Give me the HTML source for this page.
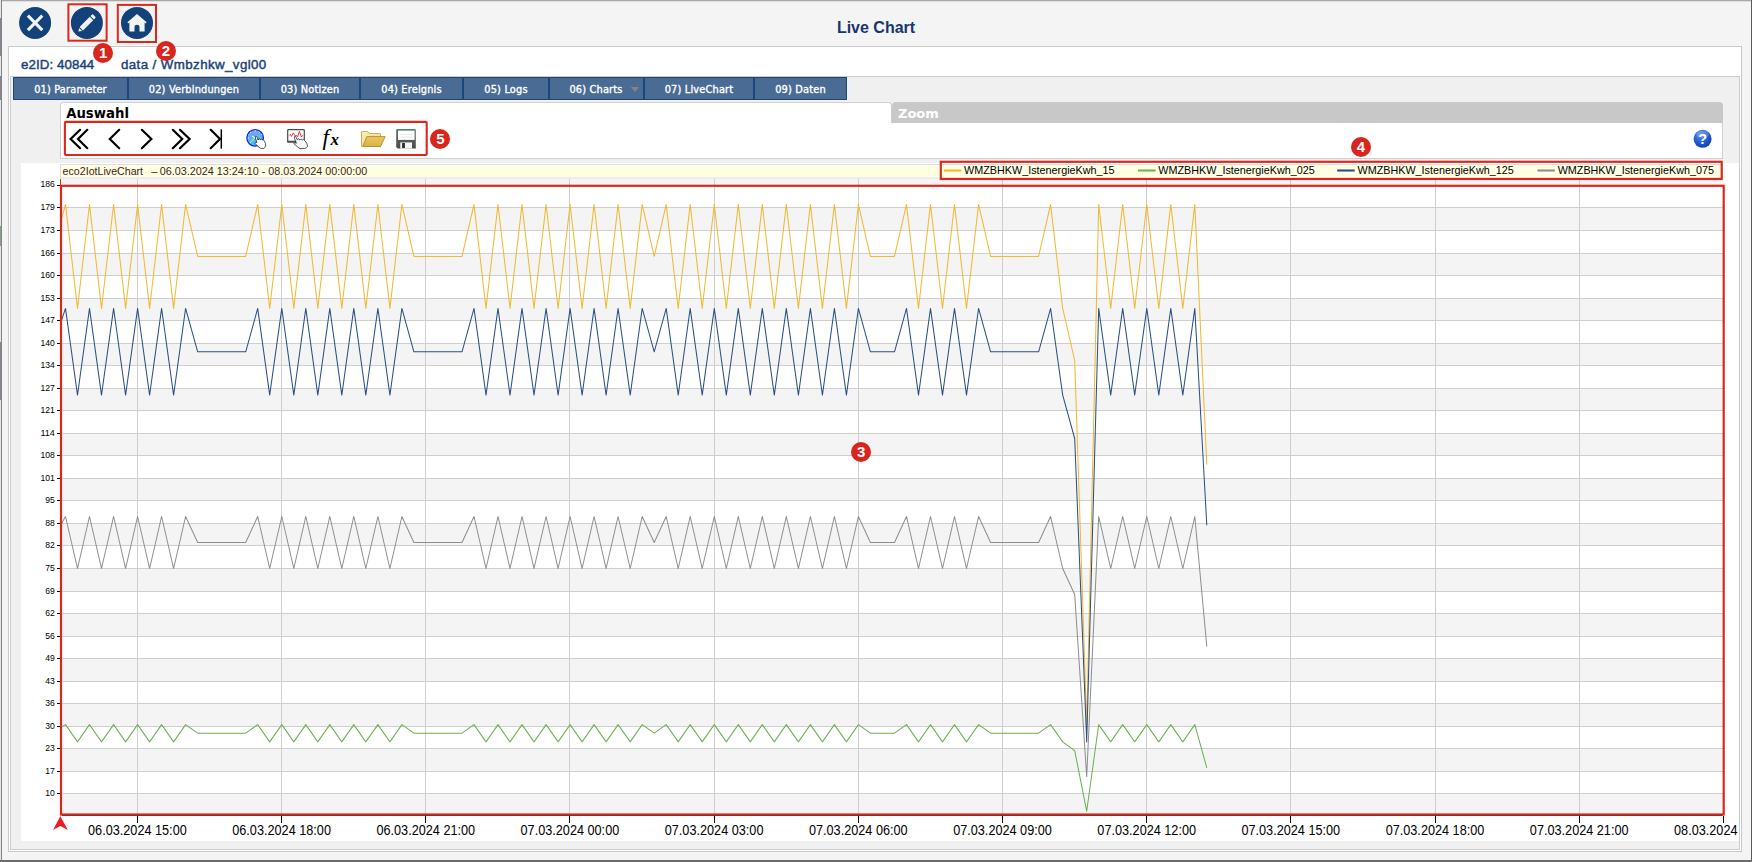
<!DOCTYPE html>
<html lang="de">
<head>
<meta charset="utf-8">
<title>Live Chart</title>
<style>
html,body{margin:0;padding:0}
body{width:1752px;height:862px;overflow:hidden;position:relative;background:#f4f4f4;font-family:"Liberation Sans",sans-serif;}
div,svg{position:absolute;box-sizing:border-box}
.wtop{left:0;top:0;width:1752px;height:1px;background:#a9a9a9}
.wtop2{left:0;top:1px;width:1752px;height:1px;background:#dedede}
.wleft{left:0;top:0;width:2px;height:862px;background:linear-gradient(90deg,#e4e4e4 0,#e4e4e4 1px,#858585 1px,#858585 2px)}
.wl{left:0;width:1px;background:#1c2846;opacity:.5}
.wright{left:1751px;top:0;width:1px;height:862px;background:#5a5a5a}
.wbot{left:0;top:860px;width:1752px;height:2px;background:#6b6b6b}
.title{left:0;top:18px;width:1752px;text-align:center;font-weight:bold;font-size:16px;line-height:20px;color:#17376b}
.p1{left:8px;top:46px;width:1734px;height:806px;background:#fff;border:1px solid #c9c9c9}
.p2{left:10px;top:76px;width:1730px;height:774px;background:#f0f0f0;border:1px solid #cdcdcd}
.idrow{top:57px;height:16px;line-height:16px;font-size:13.300px;font-weight:normal;color:#1c4379;-webkit-text-stroke:0.450px #1c4379;white-space:nowrap}
.tabbar{left:13px;top:77px;width:834px;height:23px;background:#1c467c}
.tab{top:77px;height:23px;background:#4a6b94;border:1px solid #1c467c;color:#fff;font-family:"DejaVu Sans Condensed","DejaVu Sans",sans-serif;font-weight:normal;-webkit-text-stroke:0.350px #fff;letter-spacing:0.180px;font-size:10.900px;line-height:21px;text-align:center;white-space:nowrap}
.tab span{position:relative;top:0.5px}
.tab.dd span{left:-0.500px}
.tab.dd i{position:absolute;left:81px;top:9px;width:0;height:0;border-left:4.5px solid transparent;border-right:4.5px solid transparent;border-top:5px solid #8a8379}
.sel{left:60px;top:123px;width:1663px;height:36px;background:#fff;border:1px solid #cfcfcf;border-top:none}
.selhead{left:60px;top:102px;width:832px;height:21px;background:#fff;border:1px solid #cfcfcf;border-bottom:none;border-radius:4px 4px 0 0}
.zoomtab{left:892px;top:102px;width:830.5px;height:21px;background:#c8c8c8;border-radius:4px 4px 0 0;color:#fff;font-family:"DejaVu Sans",sans-serif;font-weight:bold;font-size:13px;line-height:23px;padding-left:6px;overflow:hidden}
.seltitle{left:66.2px;top:105px;color:#000;font-family:"DejaVu Sans",sans-serif;font-weight:bold;font-size:13.25px;line-height:18px}
.chartbox{left:21px;top:163px;width:1718px;height:678px;background:#fff;overflow:hidden}
.chart{left:0;top:0;font-family:"Liberation Sans",sans-serif}
.badge{width:20px;height:20px;border-radius:50%;background:#d9251d;color:#fff;font-weight:bold;font-size:15px;line-height:20px;text-align:center}
.icons{left:0;top:0}
</style>
</head>
<body>
<div class="title">Live Chart</div>
<div class="p1"></div>
<div class="idrow" style="left:21px;letter-spacing:0.080px">e2ID: 40844</div>
<div class="idrow" style="left:121px;letter-spacing:0.410px">data / Wmbzhkw_vgl00</div>
<div class="p2"></div>
<div class="tabbar"></div>
<div class="tab" style="left:13px;width:115px"><span>01) Parameter</span></div>
<div class="tab" style="left:128px;width:132px"><span>02) Verbindungen</span></div>
<div class="tab" style="left:260px;width:100px"><span>03) Notizen</span></div>
<div class="tab" style="left:360px;width:103px"><span>04) Ereignis</span></div>
<div class="tab" style="left:463px;width:86px"><span>05) Logs</span></div>
<div class="tab dd" style="left:549px;width:95px"><span>06) Charts</span><i></i></div>
<div class="tab" style="left:644px;width:110px"><span>07) LiveChart</span></div>
<div class="tab" style="left:754px;width:93px"><span>09) Daten</span></div>
<div class="sel"></div><div class="selhead"></div>
<div class="zoomtab">Zoom</div>
<div class="seltitle">Auswahl</div>
<div class="chartbox">
<svg class="chart" width="1718" height="678" viewBox="21 163 1718 678">
<rect x="61.0" y="179" width="1662.0" height="6.0" fill="#f4f4f4"/>
<rect x="61.0" y="208" width="1662.0" height="22" fill="#f4f4f4"/>
<rect x="61.0" y="254" width="1662.0" height="21" fill="#f4f4f4"/>
<rect x="61.0" y="299" width="1662.0" height="21" fill="#f4f4f4"/>
<rect x="61.0" y="344" width="1662.0" height="21" fill="#f4f4f4"/>
<rect x="61.0" y="389" width="1662.0" height="21" fill="#f4f4f4"/>
<rect x="61.0" y="434" width="1662.0" height="21" fill="#f4f4f4"/>
<rect x="61.0" y="479" width="1662.0" height="21" fill="#f4f4f4"/>
<rect x="61.0" y="524" width="1662.0" height="21" fill="#f4f4f4"/>
<rect x="61.0" y="569" width="1662.0" height="22" fill="#f4f4f4"/>
<rect x="61.0" y="614" width="1662.0" height="22" fill="#f4f4f4"/>
<rect x="61.0" y="659" width="1662.0" height="22" fill="#f4f4f4"/>
<rect x="61.0" y="704" width="1662.0" height="22" fill="#f4f4f4"/>
<rect x="61.0" y="749" width="1662.0" height="22" fill="#f4f4f4"/>
<rect x="61.0" y="794" width="1662.0" height="22" fill="#f4f4f4"/>
<path d="M61.0 207.5H1723.0M61.0 230.5H1723.0M61.0 253.5H1723.0M61.0 275.5H1723.0M61.0 298.5H1723.0M61.0 320.5H1723.0M61.0 343.5H1723.0M61.0 365.5H1723.0M61.0 388.5H1723.0M61.0 410.5H1723.0M61.0 433.5H1723.0M61.0 455.5H1723.0M61.0 478.5H1723.0M61.0 500.5H1723.0M61.0 523.5H1723.0M61.0 545.5H1723.0M61.0 568.5H1723.0M61.0 591.5H1723.0M61.0 613.5H1723.0M61.0 636.5H1723.0M61.0 658.5H1723.0M61.0 681.5H1723.0M61.0 703.5H1723.0M61.0 726.5H1723.0M61.0 748.5H1723.0M61.0 771.5H1723.0M61.0 793.5H1723.0M137.5 179V815.0M281.5 179V815.0M425.5 179V815.0M569.5 179V815.0M714.5 179V815.0M858.5 179V815.0M1002.5 179V815.0M1146.5 179V815.0M1290.5 179V815.0M1435.5 179V815.0M1579.5 179V815.0" stroke="#cecece" stroke-width="1" fill="none" shape-rendering="crispEdges"/>
<rect x="60.5" y="164.5" width="1662" height="13.5" fill="#ffffe1" stroke="#dcdce4" stroke-width="1"/>
<text x="62.6" y="174.8" font-size="11.2" fill="#451c1c" textLength="80.5" lengthAdjust="spacingAndGlyphs">eco2IotLiveChart</text>
<text x="151.3" y="174.8" font-size="11.2" fill="#451c1c">–</text>
<text x="159.7" y="174.8" font-size="11.2" fill="#451c1c" textLength="207.6" lengthAdjust="spacingAndGlyphs">06.03.2024 13:24:10 - 08.03.2024 00:00:00</text>
<polyline points="61.6,218.4 65.5,204.4 77.5,308.4 89.5,204.4 101.5,308.4 113.6,204.4 125.6,308.4 137.6,204.4 149.6,308.4 161.6,204.4 173.6,308.4 185.6,204.4 197.7,256.4 209.7,256.4 221.7,256.4 233.7,256.4 245.7,256.4 257.7,204.4 269.7,308.4 281.8,204.4 293.8,308.4 305.8,204.4 317.8,308.4 329.8,204.4 341.8,308.4 353.8,204.4 365.8,308.4 377.9,204.4 389.9,308.4 401.9,204.4 413.9,256.4 425.9,256.4 437.9,256.4 449.9,256.4 462.0,256.4 474.0,204.4 486.0,308.4 498.0,204.4 510.0,308.4 522.0,204.4 534.0,308.4 546.1,204.4 558.1,308.4 570.1,204.4 582.1,308.4 594.1,204.4 606.1,308.4 618.1,204.4 630.2,308.4 642.2,204.4 654.2,256.4 666.2,204.4 678.2,308.4 690.2,204.4 702.2,308.4 714.3,204.4 726.3,308.4 738.3,204.4 750.3,308.4 762.3,204.4 774.3,308.4 786.3,204.4 798.4,308.4 810.4,204.4 822.4,308.4 834.4,204.4 846.4,308.4 858.4,204.4 870.4,256.4 882.5,256.4 894.5,256.4 906.5,204.4 918.5,308.4 930.5,204.4 942.5,308.4 954.5,204.4 966.5,308.4 978.6,204.4 990.6,256.4 1002.6,256.4 1014.6,256.4 1026.6,256.4 1038.6,256.4 1050.6,204.4 1062.7,308.4 1074.7,360.4 1086.7,724.6 1098.7,204.4 1110.7,308.4 1122.7,204.4 1134.7,308.4 1146.8,204.4 1158.8,308.4 1170.8,204.4 1182.8,308.4 1194.8,204.4 1206.8,464.5" fill="none" stroke="#f4b730" stroke-width="1.020" stroke-linejoin="round"/>
<polyline points="61.6,726.9 65.5,724.6 77.5,741.9 89.5,724.6 101.5,741.9 113.6,724.6 125.6,741.9 137.6,724.6 149.6,741.9 161.6,724.6 173.6,741.9 185.6,724.6 197.7,733.2 209.7,733.2 221.7,733.2 233.7,733.2 245.7,733.2 257.7,724.6 269.7,741.9 281.8,724.6 293.8,741.9 305.8,724.6 317.8,741.9 329.8,724.6 341.8,741.9 353.8,724.6 365.8,741.9 377.9,724.6 389.9,741.9 401.9,724.6 413.9,733.2 425.9,733.2 437.9,733.2 449.9,733.2 462.0,733.2 474.0,724.6 486.0,741.9 498.0,724.6 510.0,741.9 522.0,724.6 534.0,741.9 546.1,724.6 558.1,741.9 570.1,724.6 582.1,741.9 594.1,724.6 606.1,741.9 618.1,724.6 630.2,741.9 642.2,724.6 654.2,733.2 666.2,724.6 678.2,741.9 690.2,724.6 702.2,741.9 714.3,724.6 726.3,741.9 738.3,724.6 750.3,741.9 762.3,724.6 774.3,741.9 786.3,724.6 798.4,741.9 810.4,724.6 822.4,741.9 834.4,724.6 846.4,741.9 858.4,724.6 870.4,733.2 882.5,733.2 894.5,733.2 906.5,724.6 918.5,741.9 930.5,724.6 942.5,741.9 954.5,724.6 966.5,741.9 978.6,724.6 990.6,733.2 1002.6,733.2 1014.6,733.2 1026.6,733.2 1038.6,733.2 1050.6,724.6 1062.7,741.9 1074.7,750.6 1086.7,811.3 1098.7,724.6 1110.7,741.9 1122.7,724.6 1134.7,741.9 1146.8,724.6 1158.8,741.9 1170.8,724.6 1182.8,741.9 1194.8,724.6 1206.8,767.9" fill="none" stroke="#6ab150" stroke-width="1.020" stroke-linejoin="round"/>
<polyline points="61.6,320.1 65.5,308.4 77.5,395.1 89.5,308.4 101.5,395.1 113.6,308.4 125.6,395.1 137.6,308.4 149.6,395.1 161.6,308.4 173.6,395.1 185.6,308.4 197.7,351.8 209.7,351.8 221.7,351.8 233.7,351.8 245.7,351.8 257.7,308.4 269.7,395.1 281.8,308.4 293.8,395.1 305.8,308.4 317.8,395.1 329.8,308.4 341.8,395.1 353.8,308.4 365.8,395.1 377.9,308.4 389.9,395.1 401.9,308.4 413.9,351.8 425.9,351.8 437.9,351.8 449.9,351.8 462.0,351.8 474.0,308.4 486.0,395.1 498.0,308.4 510.0,395.1 522.0,308.4 534.0,395.1 546.1,308.4 558.1,395.1 570.1,308.4 582.1,395.1 594.1,308.4 606.1,395.1 618.1,308.4 630.2,395.1 642.2,308.4 654.2,351.8 666.2,308.4 678.2,395.1 690.2,308.4 702.2,395.1 714.3,308.4 726.3,395.1 738.3,308.4 750.3,395.1 762.3,308.4 774.3,395.1 786.3,308.4 798.4,395.1 810.4,308.4 822.4,395.1 834.4,308.4 846.4,395.1 858.4,308.4 870.4,351.8 882.5,351.8 894.5,351.8 906.5,308.4 918.5,395.1 930.5,308.4 942.5,395.1 954.5,308.4 966.5,395.1 978.6,308.4 990.6,351.8 1002.6,351.8 1014.6,351.8 1026.6,351.8 1038.6,351.8 1050.6,308.4 1062.7,395.1 1074.7,438.5 1086.7,741.9 1098.7,308.4 1110.7,395.1 1122.7,308.4 1134.7,395.1 1146.8,308.4 1158.8,395.1 1170.8,308.4 1182.8,395.1 1194.8,308.4 1206.8,525.2" fill="none" stroke="#2a4f82" stroke-width="1.020" stroke-linejoin="round"/>
<polyline points="61.6,523.5 65.5,516.5 77.5,568.5 89.5,516.5 101.5,568.5 113.6,516.5 125.6,568.5 137.6,516.5 149.6,568.5 161.6,516.5 173.6,568.5 185.6,516.5 197.7,542.5 209.7,542.5 221.7,542.5 233.7,542.5 245.7,542.5 257.7,516.5 269.7,568.5 281.8,516.5 293.8,568.5 305.8,516.5 317.8,568.5 329.8,516.5 341.8,568.5 353.8,516.5 365.8,568.5 377.9,516.5 389.9,568.5 401.9,516.5 413.9,542.5 425.9,542.5 437.9,542.5 449.9,542.5 462.0,542.5 474.0,516.5 486.0,568.5 498.0,516.5 510.0,568.5 522.0,516.5 534.0,568.5 546.1,516.5 558.1,568.5 570.1,516.5 582.1,568.5 594.1,516.5 606.1,568.5 618.1,516.5 630.2,568.5 642.2,516.5 654.2,542.5 666.2,516.5 678.2,568.5 690.2,516.5 702.2,568.5 714.3,516.5 726.3,568.5 738.3,516.5 750.3,568.5 762.3,516.5 774.3,568.5 786.3,516.5 798.4,568.5 810.4,516.5 822.4,568.5 834.4,516.5 846.4,568.5 858.4,516.5 870.4,542.5 882.5,542.5 894.5,542.5 906.5,516.5 918.5,568.5 930.5,516.5 942.5,568.5 954.5,516.5 966.5,568.5 978.6,516.5 990.6,542.5 1002.6,542.5 1014.6,542.5 1026.6,542.5 1038.6,542.5 1050.6,516.5 1062.7,568.5 1074.7,594.5 1086.7,776.6 1098.7,516.5 1110.7,568.5 1122.7,516.5 1134.7,568.5 1146.8,516.5 1158.8,568.5 1170.8,516.5 1182.8,568.5 1194.8,516.5 1206.8,646.5" fill="none" stroke="#8e8e8e" stroke-width="1.020" stroke-linejoin="round"/>
<text x="40.5" y="186.9" font-size="9.800" fill="#000" textLength="14.4" lengthAdjust="spacingAndGlyphs">186</text>
<text x="40.5" y="210.4" font-size="9.800" fill="#000" textLength="14.4" lengthAdjust="spacingAndGlyphs">179</text>
<text x="40.5" y="233.4" font-size="9.800" fill="#000" textLength="14.4" lengthAdjust="spacingAndGlyphs">173</text>
<text x="40.5" y="256.4" font-size="9.800" fill="#000" textLength="14.4" lengthAdjust="spacingAndGlyphs">166</text>
<text x="40.5" y="278.4" font-size="9.800" fill="#000" textLength="14.4" lengthAdjust="spacingAndGlyphs">160</text>
<text x="40.5" y="301.4" font-size="9.800" fill="#000" textLength="14.4" lengthAdjust="spacingAndGlyphs">153</text>
<text x="40.5" y="323.4" font-size="9.800" fill="#000" textLength="14.4" lengthAdjust="spacingAndGlyphs">147</text>
<text x="40.5" y="346.4" font-size="9.800" fill="#000" textLength="14.4" lengthAdjust="spacingAndGlyphs">140</text>
<text x="40.5" y="368.4" font-size="9.800" fill="#000" textLength="14.4" lengthAdjust="spacingAndGlyphs">134</text>
<text x="40.5" y="391.4" font-size="9.800" fill="#000" textLength="14.4" lengthAdjust="spacingAndGlyphs">127</text>
<text x="40.5" y="413.4" font-size="9.800" fill="#000" textLength="14.4" lengthAdjust="spacingAndGlyphs">121</text>
<text x="40.5" y="436.4" font-size="9.800" fill="#000" textLength="14.4" lengthAdjust="spacingAndGlyphs">114</text>
<text x="40.5" y="458.4" font-size="9.800" fill="#000" textLength="14.4" lengthAdjust="spacingAndGlyphs">108</text>
<text x="40.5" y="481.4" font-size="9.800" fill="#000" textLength="14.4" lengthAdjust="spacingAndGlyphs">101</text>
<text x="45.3" y="503.4" font-size="9.800" fill="#000" textLength="9.6" lengthAdjust="spacingAndGlyphs">95</text>
<text x="45.3" y="526.4" font-size="9.800" fill="#000" textLength="9.6" lengthAdjust="spacingAndGlyphs">88</text>
<text x="45.3" y="548.4" font-size="9.800" fill="#000" textLength="9.6" lengthAdjust="spacingAndGlyphs">82</text>
<text x="45.3" y="571.4" font-size="9.800" fill="#000" textLength="9.6" lengthAdjust="spacingAndGlyphs">75</text>
<text x="45.3" y="594.4" font-size="9.800" fill="#000" textLength="9.6" lengthAdjust="spacingAndGlyphs">69</text>
<text x="45.3" y="616.4" font-size="9.800" fill="#000" textLength="9.6" lengthAdjust="spacingAndGlyphs">62</text>
<text x="45.3" y="639.4" font-size="9.800" fill="#000" textLength="9.6" lengthAdjust="spacingAndGlyphs">56</text>
<text x="45.3" y="661.4" font-size="9.800" fill="#000" textLength="9.6" lengthAdjust="spacingAndGlyphs">49</text>
<text x="45.3" y="684.4" font-size="9.800" fill="#000" textLength="9.6" lengthAdjust="spacingAndGlyphs">43</text>
<text x="45.3" y="706.4" font-size="9.800" fill="#000" textLength="9.6" lengthAdjust="spacingAndGlyphs">36</text>
<text x="45.3" y="729.4" font-size="9.800" fill="#000" textLength="9.6" lengthAdjust="spacingAndGlyphs">30</text>
<text x="45.3" y="751.4" font-size="9.800" fill="#000" textLength="9.6" lengthAdjust="spacingAndGlyphs">23</text>
<text x="45.3" y="774.4" font-size="9.800" fill="#000" textLength="9.6" lengthAdjust="spacingAndGlyphs">17</text>
<text x="45.3" y="796.4" font-size="9.800" fill="#000" textLength="9.6" lengthAdjust="spacingAndGlyphs">10</text>
<path d="M57 185.5H60M57 207.5H60M57 230.5H60M57 253.5H60M57 275.5H60M57 298.5H60M57 320.5H60M57 343.5H60M57 365.5H60M57 388.5H60M57 410.5H60M57 433.5H60M57 455.5H60M57 478.5H60M57 500.5H60M57 523.5H60M57 545.5H60M57 568.5H60M57 591.5H60M57 613.5H60M57 636.5H60M57 658.5H60M57 681.5H60M57 703.5H60M57 726.5H60M57 748.5H60M57 771.5H60M57 793.5H60M137.5 816V823M281.5 816V823M425.5 816V823M569.5 816V823M714.5 816V823M858.5 816V823M1002.5 816V823M1146.5 816V823M1290.5 816V823M1435.5 816V823M1579.5 816V823M1723.5 816V823" stroke="#000" stroke-width="1" fill="none" shape-rendering="crispEdges"/>
<text x="137.4" y="834.6" text-anchor="middle" font-size="13.9" fill="#000" textLength="98.700" lengthAdjust="spacingAndGlyphs">06.03.2024 15:00</text>
<text x="281.6" y="834.6" text-anchor="middle" font-size="13.9" fill="#000" textLength="98.700" lengthAdjust="spacingAndGlyphs">06.03.2024 18:00</text>
<text x="425.8" y="834.6" text-anchor="middle" font-size="13.9" fill="#000" textLength="98.700" lengthAdjust="spacingAndGlyphs">06.03.2024 21:00</text>
<text x="569.9" y="834.6" text-anchor="middle" font-size="13.9" fill="#000" textLength="98.700" lengthAdjust="spacingAndGlyphs">07.03.2024 00:00</text>
<text x="714.1" y="834.6" text-anchor="middle" font-size="13.9" fill="#000" textLength="98.700" lengthAdjust="spacingAndGlyphs">07.03.2024 03:00</text>
<text x="858.3" y="834.6" text-anchor="middle" font-size="13.9" fill="#000" textLength="98.700" lengthAdjust="spacingAndGlyphs">07.03.2024 06:00</text>
<text x="1002.5" y="834.6" text-anchor="middle" font-size="13.9" fill="#000" textLength="98.700" lengthAdjust="spacingAndGlyphs">07.03.2024 09:00</text>
<text x="1146.7" y="834.6" text-anchor="middle" font-size="13.9" fill="#000" textLength="98.700" lengthAdjust="spacingAndGlyphs">07.03.2024 12:00</text>
<text x="1290.8" y="834.6" text-anchor="middle" font-size="13.9" fill="#000" textLength="98.700" lengthAdjust="spacingAndGlyphs">07.03.2024 15:00</text>
<text x="1435.0" y="834.6" text-anchor="middle" font-size="13.9" fill="#000" textLength="98.700" lengthAdjust="spacingAndGlyphs">07.03.2024 18:00</text>
<text x="1579.2" y="834.6" text-anchor="middle" font-size="13.9" fill="#000" textLength="98.700" lengthAdjust="spacingAndGlyphs">07.03.2024 21:00</text>
<text x="1723.4" y="834.6" text-anchor="middle" font-size="13.9" fill="#000" textLength="98.700" lengthAdjust="spacingAndGlyphs">08.03.2024 00:00</text>
<path d="M943.8 170.500h17.5" stroke="#f4b730" stroke-width="2.100"/>
<text x="964.1" y="173.8" font-size="11" fill="#000" textLength="150.4" lengthAdjust="spacingAndGlyphs">WMZBHKW_IstenergieKwh_15</text>
<path d="M1138.0 170.500h17.5" stroke="#6ab150" stroke-width="2.100"/>
<text x="1158.3" y="173.8" font-size="11" fill="#000" textLength="156.4" lengthAdjust="spacingAndGlyphs">WMZBHKW_IstenergieKwh_025</text>
<path d="M1337.2 170.500h17.5" stroke="#2a4f82" stroke-width="2.100"/>
<text x="1357.5" y="173.8" font-size="11" fill="#000" textLength="156.3" lengthAdjust="spacingAndGlyphs">WMZBHKW_IstenergieKwh_125</text>
<path d="M1537.4 170.500h17.5" stroke="#8e8e8e" stroke-width="2.100"/>
<text x="1557.7" y="173.8" font-size="11" fill="#000" textLength="156.2" lengthAdjust="spacingAndGlyphs">WMZBHKW_IstenergieKwh_075</text>
<path d="M60.5 179V185" stroke="#dc271d" stroke-width="1"/>
<path d="M60.3 816.2L67.9 830L60.3 825.9L53 830Z" fill="#ed1c24"/>
</svg>
</div>
<svg class="icons" width="1752" height="862" viewBox="0 0 1752 862">
<defs>
<linearGradient id="gclock" x1="0" y1="0" x2="0.3" y2="1"><stop offset="0" stop-color="#7f9cf2"/><stop offset="1" stop-color="#45c2ee"/></linearGradient>
<radialGradient id="ghelp" cx="0.4" cy="0.3" r="0.8"><stop offset="0" stop-color="#5d8ff0"/><stop offset="0.6" stop-color="#1f55c8"/><stop offset="1" stop-color="#0f3aa0"/></radialGradient>
<linearGradient id="gfold" x1="0" y1="0" x2="0" y2="1"><stop offset="0" stop-color="#e9c862"/><stop offset="1" stop-color="#dcb144"/></linearGradient>
<linearGradient id="gfback" x1="0" y1="0" x2="1" y2="1"><stop offset="0" stop-color="#fbf0b4"/><stop offset="1" stop-color="#efd98a"/></linearGradient>
<linearGradient id="gflop" x1="0" y1="0" x2="0" y2="1"><stop offset="0" stop-color="#6c6c6c"/><stop offset="1" stop-color="#4a4a4a"/></linearGradient>
</defs>
<!-- round buttons -->
<g>
<circle cx="35.1" cy="22.9" r="16" fill="#13417a"/>
<path d="M27.9 15.7L42.3 30.1M42.3 15.7L27.9 30.1" stroke="#f4f4f4" stroke-width="3.1" fill="none"/>
<circle cx="86.9" cy="22.9" r="16" fill="#13417a"/>
<g transform="translate(86.9 23.1) rotate(-45)" fill="#f4f4f4">
<path d="M-12 0L-8.900 -2.100V2.100Z"/>
<path d="M-7.900 -2.400H6.500V2.400H-7.900Z"/>
<path d="M7.500 -2.400H9.800Q10.500 -2.400 10.500 -1.700V1.700Q10.500 2.400 9.800 2.400H7.500Z"/>
</g>
<circle cx="137" cy="22.9" r="16" fill="#13417a"/>
<path d="M137 14.1L146.6 22.2L145.6 23.4L144.6 22.6V31.4H139.5V26.8Q139.5 24.8 137 24.8Q134.5 24.8 134.5 26.8V31.4H129.4V22.6L128.4 23.4L127.4 22.2Z" fill="#f4f4f4"/>
</g>
<!-- red annotation boxes 1,2,5 -->
<rect x="68.4" y="4.3" width="38.2" height="36.4" fill="none" stroke="#dc271d" stroke-width="2"/>
<rect x="117.8" y="4.9" width="38.2" height="37.1" fill="none" stroke="#dc271d" stroke-width="2"/>
<rect x="64.9" y="121.9" width="361.8" height="33.1" rx="1" fill="none" stroke="#dc271d" stroke-width="2.1"/>
<rect x="61" y="185.8" width="1662.7" height="628.7" fill="none" stroke="#dc271d" stroke-width="2.2"/><path d="M62 815.4H1722.600" stroke="#8a1209" stroke-width="0.9"/><rect x="940.8" y="161.800" width="780.9" height="17.2" fill="none" stroke="#dc271d" stroke-width="2.150"/>
<!-- nav arrows -->
<g stroke="#000" stroke-width="2.2" fill="none" stroke-linecap="round" stroke-linejoin="miter">
<path d="M80.1 129.8L70.6 139L80.1 148.2M87.3 129.8L78 139L87.3 148.2"/>
<path d="M119.2 129.8L109.8 139L119.2 148.2"/>
<path d="M141.8 129.8L151.4 139L141.8 148.2"/>
<path d="M172.8 129.8L182.2 139L172.8 148.2M180 129.8L189.6 139L180 148.2"/>
<path d="M210.7 129.8L220 139L210.7 148.2"/>
<path d="M221.3 129.4V148.7" stroke-width="1.5" stroke-linecap="butt"/>
</g>
<!-- clock icon -->
<g>
<circle cx="255.150" cy="137.850" r="8.300" fill="url(#gclock)" stroke="#1420f2" stroke-width="1.300"/>
<g fill="#fff" opacity="0.900">
<circle cx="255.200" cy="130.900" r="0.550"/><circle cx="259.300" cy="132.200" r="0.550"/><circle cx="250.600" cy="132.600" r="0.550"/><circle cx="248.300" cy="137.900" r="0.550"/><circle cx="250.500" cy="142.600" r="0.550"/><circle cx="261.800" cy="134.600" r="0.500"/><circle cx="248.900" cy="134.800" r="0.450"/>
</g>
<path d="M254.900 137.900L252.200 136.200" stroke="#fff" stroke-width="1.100" opacity="0.950" fill="none"/>
<path d="M254.900 137.900L250.600 142.300" stroke="#fff" stroke-width="0.900" stroke-dasharray="1.200 0.500" opacity="0.950" fill="none"/>
<path d="M255.500 136.600Q255.900 136 256.500 136.500L257.200 137.600L258.100 140L258.600 139Q259.300 138.500 259.900 139.100L260.300 139.800Q261 138.700 261.900 139.100L262.500 140Q263.300 139.500 263.900 140.200L264.700 141.700Q265.800 143.800 265.700 145.200Q265.500 146.900 264.700 147.600L263.800 148.400H260.500L258.100 146.500L256 144.400L255.200 143.400Q254.900 142.600 255.700 142.300Q256.300 142.200 256.800 142.800L256.300 140.500L255.400 138.100Z" fill="#fff" stroke="#1c1c1c" stroke-width="0.75" stroke-linejoin="round"/>
</g>
<!-- chart-hand icon -->
<g>
<rect x="287.700" y="129.600" width="16.600" height="12.400" rx="0.800" fill="#fff" stroke="#4a4a4a" stroke-width="1.200"/>
<rect x="287.100" y="140.800" width="17.800" height="1.800" rx="0.500" fill="#4a4a4a"/>
<path d="M289.200 135.600L290.400 134.300L291.400 136.400L293.400 132.900L295.100 135.900L296.700 135.600L297.500 137L299.400 131.300L301.400 137L302.700 135.300" fill="none" stroke="#ee2a30" stroke-width="0.950" stroke-linejoin="round"/>
<path d="M294.300 136.900Q294.600 136.100 295.300 136.300L296 137.200L297.200 139.700L297.700 139Q298.700 138.400 299.300 139.200L299.900 140.100Q300.500 138.900 301.300 139.100L302.300 140.100Q303 139.100 303.700 139.500L305.300 141.100L306.800 143.500Q307.700 145.400 307.500 146.300Q307.300 147.200 306.600 147.600L304.600 148.500L299.900 148.600L297.500 146.800L295.100 144.700L293.900 143.800Q293.600 143 294.400 142.800Q295.500 142.700 296.300 143.300L295.700 141.100L294.500 138.700Z" fill="#f7f7f7" stroke="#1c1c1c" stroke-width="0.75" stroke-linejoin="round"/>
</g>
<!-- fx -->
<text x="322.600" y="144.800" font-family="'Liberation Serif',serif" font-style="italic" font-size="23" fill="#000">f</text>
<text x="330.600" y="145.200" font-family="'Liberation Serif',serif" font-style="italic" font-weight="bold" font-size="17" fill="#000">x</text>
<!-- folder -->
<g stroke-linejoin="round">
<path d="M361.500 146.300V132.300Q361.500 131.500 362.300 131.500H367.500L369.300 133.500H379.800Q380.500 133.500 380.500 134.200V146.300Z" fill="url(#gfback)" stroke="#c9a24a" stroke-width="0.9"/>
<path d="M366.800 136.600H385.200L380.600 146.500H362.800Z" fill="url(#gfold)" stroke="#b98a2a" stroke-width="0.9"/>
</g>
<!-- floppy -->
<g>
<path d="M396.200 130Q396.200 129.100 397.100 129.100H414.900Q415.800 129.100 415.800 130V148.600H397.800L396.200 147Z" fill="url(#gflop)"/>
<rect x="398" y="129.100" width="16.600" height="1.500" fill="#3d8a6c"/>
<rect x="398" y="130.600" width="16.600" height="9.300" fill="#fdfdfd"/>
<path d="M400.500 134.600h11.800M400.500 137.200h11.800" stroke="#e2e2e2" stroke-width="0.8"/>
<rect x="400.300" y="142.400" width="11.700" height="6.200" fill="#f6f6f6"/>
<rect x="402.100" y="143" width="2.800" height="5" fill="#2c2c2c"/>
</g>
<!-- help -->
<circle cx="1702.600" cy="138.800" r="9" fill="url(#ghelp)"/>
<ellipse cx="1702.600" cy="134" rx="6.500" ry="3.600" fill="#fff" opacity="0.18"/>
<text x="1702.700" y="144" text-anchor="middle" font-family="'Liberation Sans',sans-serif" font-weight="bold" font-size="14.500" fill="#fff">?</text>
</svg>

<div class="badge" style="left:93.2px;top:43.1px">1</div>
<div class="badge" style="left:156.0px;top:41.4px">2</div>
<div class="badge" style="left:851.2px;top:441.8px">3</div>
<div class="badge" style="left:1351.0px;top:136.5px">4</div>
<div class="badge" style="left:430.4px;top:129.3px">5</div>
<div class="wtop"></div><div class="wtop2"></div><div class="wleft"></div><div class="wl" style="top:18px;height:38px"></div><div class="wl" style="top:76px;height:24px"></div><div class="wl" style="top:226px;height:20px;background:#2c5a30"></div><div class="wl" style="top:342px;height:58px"></div><div class="wright"></div><div class="wbot"></div>
</body>
</html>
